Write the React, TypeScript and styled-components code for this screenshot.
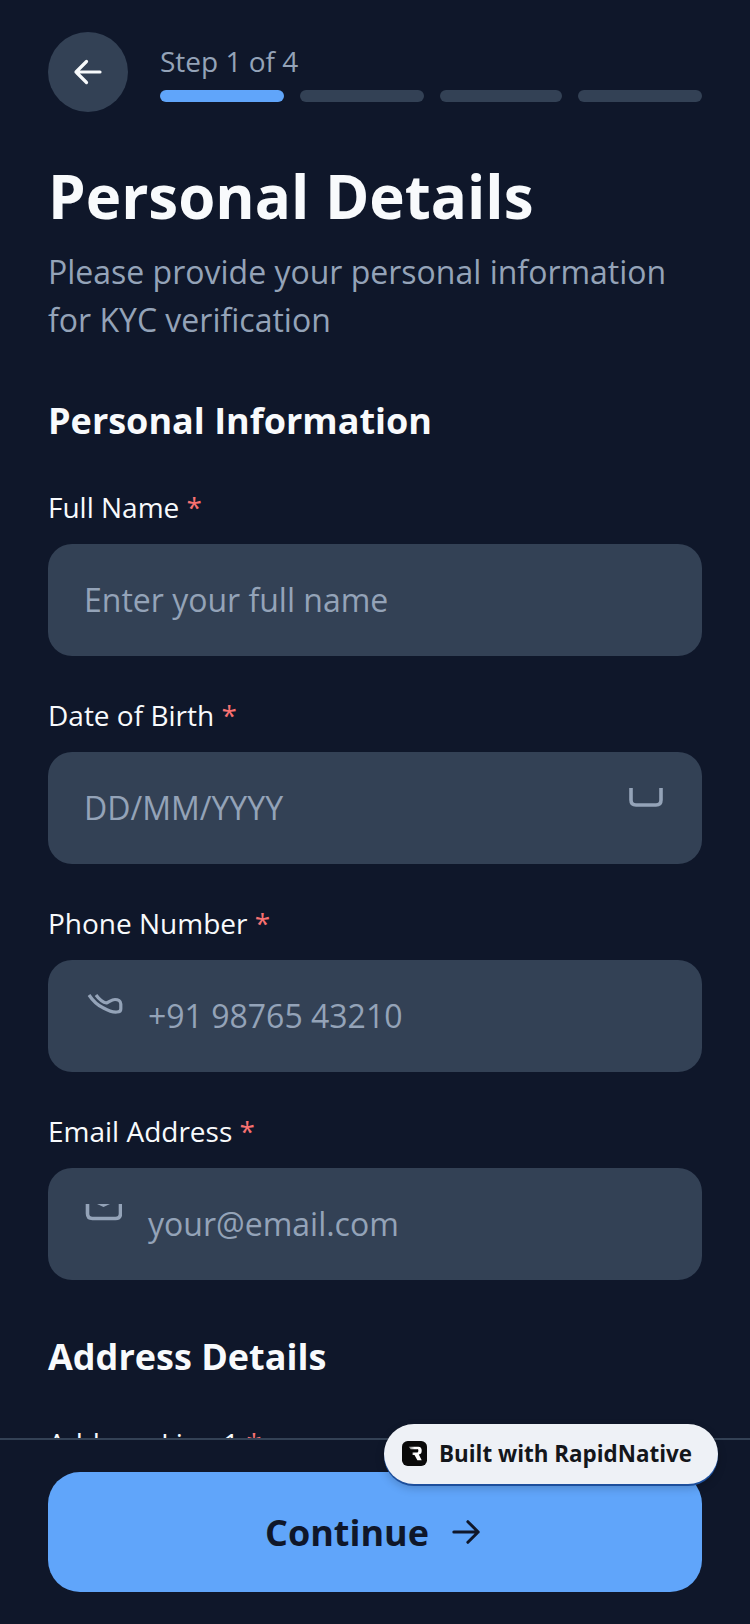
import React from "react";
import styled, { createGlobalStyle } from "styled-components";

const Global = createGlobalStyle`
  html, body { margin: 0; padding: 0; background: #0f172a; }
  * { box-sizing: border-box; }
`;

const Screen = styled.div`
  position: relative;
  width: 750px;
  height: 1624px;
  display: flex;
  flex-direction: column;
  overflow: hidden;
  background: #0f172a;
  font-family: "Open Sans", "Noto Sans", sans-serif;
`;

const Scroll = styled.main`
  flex: 1;
  min-height: 0;
  overflow: hidden;
  padding: 32px 48px 0;
`;

const Header = styled.header`
  display: flex;
  align-items: center;
  gap: 32px;
  height: 80px;
`;

const BackButton = styled.button`
  width: 80px;
  height: 80px;
  flex: none;
  border: 0;
  padding: 0;
  border-radius: 50%;
  background: #334155;
  display: flex;
  align-items: center;
  justify-content: center;
`;

const Progress = styled.div`
  flex: 1;
  display: flex;
  flex-direction: column;
  gap: 9px;
  margin-bottom: 2px;
`;

const StepText = styled.div`
  font-size: 28px;
  line-height: 40px;
  color: #94a3b8;
`;

const Bars = styled.div`
  display: flex;
  gap: 16px;
`;

const Bar = styled.div<{ $active?: boolean; $width: number }>`
  flex: none;
  width: ${(p) => p.$width}px;
  height: 12px;
  border-radius: 6px;
  background: ${(p) => (p.$active ? "#60a5fa" : "#334155")};
`;

const Title = styled.h1`
  margin: 44px 0 0;
  font-size: 60px;
  line-height: 80px;
  font-weight: 700;
  color: #f8fafc;
`;

const Subtitle = styled.p`
  margin: 12px 0 0;
  font-size: 32px;
  line-height: 48px;
  color: #94a3b8;
`;

const SectionTitle = styled.h2<{ $top: number }>`
  margin: ${(p) => p.$top}px 0 0;
  font-size: 36px;
  line-height: 48px;
  font-weight: 700;
  color: #f8fafc;
`;

const Field = styled.div`
  margin-top: 42px;
  & + & { margin-top: 39px; }
`;

const Label = styled.label`
  display: block;
  font-size: 28px;
  line-height: 40px;
  font-weight: 500;
  color: #f8fafc;
  margin-bottom: 17px;
`;

const Star = styled.span`
  color: #f87171;
`;

const InputBox = styled.div`
  height: 112px;
  border-radius: 24px;
  background: #334155;
  padding: 0 36px;
  display: flex;
  align-items: center;
  gap: 26px;
  position: relative;
`;

const Placeholder = styled.span`
  font-size: 32px;
  line-height: 44px;
  color: #94a3b8;
`;

const IconSlot = styled.span`
  flex: none;
  width: 38px;
  height: 112px;
  display: block;
  position: relative;
`;

const CalendarSlot = styled.span`
  position: absolute;
  right: 39px;
  top: 36px;
  width: 34px;
  height: 20px;
`;

const Svg = styled.svg`
  display: block;
`;

const Footer = styled.footer`
  flex: none;
  border-top: 2px solid #334155;
  background: #0f172a;
  padding: 32px 48px;
`;

const Continue = styled.button`
  width: 100%;
  height: 120px;
  border: 0;
  padding: 0 4px 0 0;
  border-radius: 32px;
  background: #60a5fa;
  display: flex;
  align-items: center;
  justify-content: center;
  gap: 22px;
  font-family: inherit;
  font-size: 36px;
  font-weight: 700;
  color: #0f172a;
`;

const Badge = styled.div`
  position: absolute;
  left: 384px;
  top: 1424px;
  width: 334px;
  height: 60px;
  border-radius: 30px;
  background: #eef1f6;
  box-shadow: 0 2px 0 #1d4f9c, 0 4px 10px rgba(0, 0, 0, 0.2);
  display: flex;
  align-items: center;
  gap: 12px;
  padding: 0 0 2px 18px;
  font-size: 22.4px;
  font-weight: 700;
  color: #14161b;
  white-space: nowrap;
`;

const Logo = styled.svg`
  flex: none;
  display: block;
`;

const barWidths = [124, 124, 122, 124];

const fields = [
  { label: "Full Name", placeholder: "Enter your full name", icon: null },
  { label: "Date of Birth", placeholder: "DD/MM/YYYY", icon: "calendar" },
  { label: "Phone Number", placeholder: "+91 98765 43210", icon: "phone" },
  { label: "Email Address", placeholder: "your@email.com", icon: "mail" },
];

function FieldIcon({ kind }: { kind: string | null }) {
  if (kind === "calendar") {
    return (
      <CalendarSlot>
        <Svg width="34" height="20" viewBox="0 0 34 20" fill="none">
          <path d="M2 0V12Q2 17 7 17H27Q32 17 32 12V0" stroke="#94a3b8" strokeWidth="3.6" />
        </Svg>
      </CalendarSlot>
    );
  }
  if (kind === "phone") {
    return (
      <IconSlot>
        <Svg width="39" height="112" viewBox="0 0 39 112" fill="none">
          <path
            d="M5 35C9 41 14 45.5 19.5 48C24 50.5 29 52.5 33 52C36 52 36.8 50.5 36.8 49V44C36.8 41 34 39.5 31 39.5C28 39.5 25 42 22.5 43C19 42.5 15 39 12 35"
            stroke="#94a3b8"
            strokeWidth="3.2"
            strokeLinejoin="round"
          />
        </Svg>
      </IconSlot>
    );
  }
  if (kind === "mail") {
    return (
      <IconSlot>
        <Svg width="38" height="112" viewBox="0 0 38 112" fill="none">
          <path d="M13 36H26L19.5 39Z" fill="#94a3b8" />
          <path d="M3.5 36V45.5Q3.5 50.5 8.5 50.5H31.5Q36.5 50.5 36.5 45.5V36" stroke="#94a3b8" strokeWidth="3.6" />
        </Svg>
      </IconSlot>
    );
  }
  return null;
}

export default function App() {
  return (
    <Screen>
      <Global />
      <Scroll>
        <Header>
          <BackButton aria-label="Back">
            <Svg width="32" height="32" viewBox="0 0 32 32" fill="none">
              <path d="M28 16H4M14.5 5.5L4 16L14.5 26.5" stroke="#f8fafc" strokeWidth="3.2" strokeLinecap="round" strokeLinejoin="round" />
            </Svg>
          </BackButton>
          <Progress>
            <StepText>Step 1 of 4</StepText>
            <Bars>
              {barWidths.map((w, i) => (
                <Bar key={i} $width={w} $active={i === 0} />
              ))}
            </Bars>
          </Progress>
        </Header>
        <Title>Personal Details</Title>
        <Subtitle>
          Please provide your personal information
          <br />
          for KYC verification
        </Subtitle>
        <SectionTitle $top={53}>Personal Information</SectionTitle>
        {fields.map((f) => (
          <Field key={f.label}>
            <Label>
              {f.label} <Star>*</Star>
            </Label>
            <InputBox>
              {f.icon !== "calendar" && <FieldIcon kind={f.icon} />}
              <Placeholder>{f.placeholder}</Placeholder>
              {f.icon === "calendar" && <FieldIcon kind={f.icon} />}
            </InputBox>
          </Field>
        ))}
        <SectionTitle $top={53}>Address Details</SectionTitle>
        <Field>
          <Label>
            Address Line 1 <Star>*</Star>
          </Label>
        </Field>
      </Scroll>
      <Footer>
        <Continue>
          Continue
          <Svg width="30" height="30" viewBox="0 0 32 32" fill="none">
            <path d="M3 16H29M18 5L29 16L18 27" stroke="#0f172a" strokeWidth="3.2" strokeLinecap="round" strokeLinejoin="round" />
          </Svg>
        </Continue>
      </Footer>
      <Badge>
        <Logo width="25" height="25" viewBox="0 0 26 26">
          <defs>
            <linearGradient id="rn" x1="0" y1="0" x2="1" y2="0">
              <stop offset="0" stopColor="#777" />
              <stop offset="0.45" stopColor="#fff" />
            </linearGradient>
          </defs>
          <rect width="26" height="26" rx="6" fill="#0a0a0a" />
          <path d="M7 6H17Q20.5 6 20.5 10T17.5 14L20.5 20H16L13 14.5H11V12H16Q17 12 17 10T16 8.5H9Z" fill="url(#rn)" />
        </Logo>
        Built with RapidNative
      </Badge>
    </Screen>
  );
}
